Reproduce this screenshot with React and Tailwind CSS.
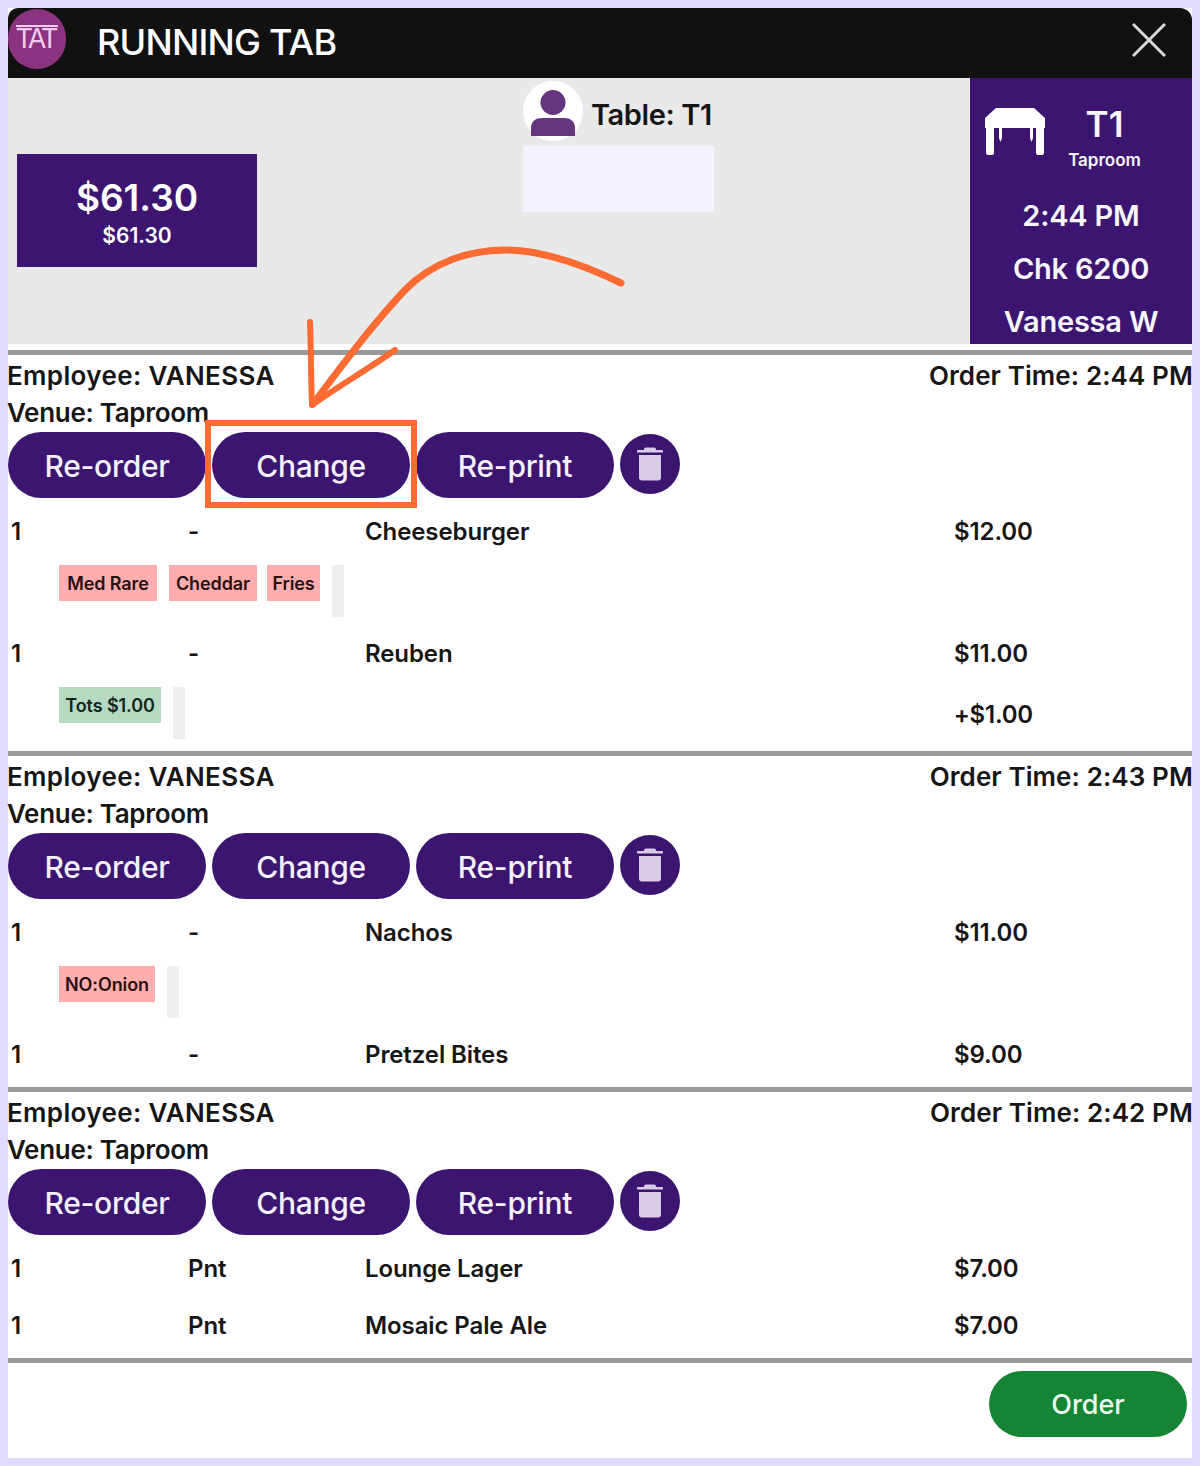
const font = { fontFamily: '"Inter", "Liberation Sans", sans-serif' };

function Trash() {
  return (
    <svg width="26" height="34" viewBox="0 0 26 34" fill="#d8cce6">
      <path d="M9 0.5h8a2 2 0 0 1 2 2v.5h6a1 1 0 0 1 1 1v1.5h-26v-1.5a1 1 0 0 1 1-1h6v-.5a2 2 0 0 1 2-2z" />
      <path d="M2 8h22v22.5a3 3 0 0 1-3 3h-16a3 3 0 0 1-3-3z" />
    </svg>
  );
}

function Pill({ children }) {
  return (
    <button className="w-[198px] h-[66px] pt-[3px] rounded-[33px] bg-[#3b1570] text-[#f5f0fa] text-[30px] font-medium tracking-[-0.3px] flex items-center justify-center">
      {children}
    </button>
  );
}

function Row({ size, name, price }) {
  return (
    <div className="grid grid-cols-[180px_177px_589px_1fr] h-[57px] items-center text-[24px] font-semibold tracking-[-0.1px] text-[#161616]">
      <div className="pl-[3px]">1</div>
      <div>{size}</div>
      <div>{name}</div>
      <div>{price}</div>
    </div>
  );
}

function Mods({ items, tone, extra }) {
  return (
    <div className="flex items-start mt-[5px] mb-[8px] pl-[51px] h-[52px] relative">
      <div className="flex">
        {items.map((m) => (
          <span
            key={m.text}
            className={`h-[36px] flex items-center justify-center whitespace-nowrap text-[18px] font-semibold tracking-[-0.1px] ${m.cls} ${tone === "green" ? "bg-[#b7d8c1] text-[#12261a]" : "bg-[#ffadad] text-[#2a1010]"}`}
          >
            {m.text}
          </span>
        ))}
        <span className="w-[12px] h-[52px] bg-[#efefef]" />
      </div>
      {extra && (
        <span className="ml-auto mr-[159px] mt-[10px] text-[24px] font-semibold tracking-[-0.2px] text-[#161616]">{extra}</span>
      )}
    </div>
  );
}

function Section({ time, children }) {
  return (
    <section className="border-t-[5px] border-[#999999]">
      <div className="flex justify-between text-[26px] font-semibold leading-[37px] pt-[2px] pb-[1px] text-[#161616] ml-[-1px] mr-[-1px]">
        <div>
          <div className="tracking-[0.35px]">Employee: VANESSA</div>
          <div className="tracking-[-0.3px]">Venue: Taproom</div>
        </div>
        <div className="tracking-[0.1px]">Order Time: {time}</div>
      </div>
      <div className="flex gap-[6px] items-start">
        <Pill>Re-order</Pill>
        <Pill>Change</Pill>
        <Pill>Re-print</Pill>
        <button className="w-[60px] h-[60px] mt-[2px] rounded-full bg-[#3b1570] flex items-center justify-center">
          <Trash />
        </button>
      </div>
      <div className="pt-[5px]">{children}</div>
    </section>
  );
}

export default function App() {
  return (
    <div style={font} className="relative w-[1200px] h-[1466px] bg-[#dfdcff] p-[8px] overflow-hidden">
      <div className="relative h-[1450px] bg-white flex flex-col">
        <header className="relative h-[70px] shrink-0 bg-[#111111] rounded-tl-[10px] rounded-tr-[12px] flex items-center pl-[89px] pr-[26px]">
          <div className="absolute left-0 top-[1px] w-[58px] h-[60px] rounded-full bg-[#8b3380] flex items-center justify-center text-[#f0cdee] text-[27px] font-normal tracking-[-3px]">
            <span className="border-t-[2px] border-[#f0cdee] leading-[24px] pr-[3px] -mt-[3px]">TAT</span>
          </div>
          <h1 className="text-[36px] font-medium text-white tracking-[-0.75px] -mt-[2px]">RUNNING TAB</h1>
          <svg className="ml-auto mb-[6px]" width="34" height="34" viewBox="0 0 34 34" stroke="#d8d8d8" strokeWidth="3" fill="none">
            <path d="M1 1L33 33M33 1L1 33" />
          </svg>
        </header>

        <div className="relative h-[266px] shrink-0 bg-[#e9e9e9] flex">
          <div className="w-[515px] pl-[9px] pt-[76px]">
            <div className="w-[240px] h-[113px] pt-[23px] bg-[#3b1570] text-white flex flex-col items-center">
              <div className="text-[37px] font-semibold leading-[42px]">$61.30</div>
              <div className="text-[21px] font-semibold leading-[26px] mt-[4px]">$61.30</div>
            </div>
          </div>
          <div className="w-[447px] pt-[3px]">
            <div className="flex items-center gap-[8px]">
              <div className="w-[60px] h-[60px] rounded-full bg-white flex items-center justify-center">
                <svg className="mt-[4px]" width="44" height="46" viewBox="0 0 44 46" fill="#65357e">
                  <ellipse cx="22" cy="12.5" rx="12.5" ry="12.5" />
                  <path d="M0 46v-8c0-7 5-10 11-10h22c6 0 11 3 11 10v8z" />
                </svg>
              </div>
              <span className="text-[29px] font-semibold text-[#161616] tracking-[-0.4px] pt-[8px]">Table: T1</span>
            </div>
            <div className="w-[191px] h-[66px] mt-[5px] bg-[#f5f3fe]" />
          </div>
          <aside className="w-[222px] bg-[#3b1570] text-[#f8f5fb] flex flex-col items-center overflow-hidden">
            <div className="flex w-full shrink-0 pt-[30px] pl-[15px] h-[111px]">
              <svg width="60" height="47" viewBox="0 0 60 47" fill="white">
                <path d="M11 0h38l11 10v10h-1v25a2 2 0 0 1-2 2h-4a2 2 0 0 1-2-2v-25h-42v25a2 2 0 0 1-2 2h-4a2 2 0 0 1-2-2v-25h-1v-10z" />
                <path d="M14 20h3v10l-1.500 4-1.500-4zM45 20h3v10l-1.500 4-1.500-4z" />
              </svg>
              <div className="flex-1 flex flex-col items-center pr-[28px] -mt-[5px]">
                <div className="text-[35px] font-semibold leading-[42px]">T1</div>
                <div className="text-[17px] font-semibold leading-[26px] mt-[2px]">Taproom</div>
              </div>
            </div>
            <div className="shrink-0 text-[29px] font-semibold leading-[53px] tracking-[-0.2px]">2:44 PM</div>
            <div className="shrink-0 text-[29px] font-semibold leading-[53px] tracking-[-0.2px]">Chk 6200</div>
            <div className="shrink-0 text-[29px] font-semibold leading-[53px] tracking-[-0.2px]">Vanessa W</div>
          </aside>
        </div>

        <div className="h-[6px] shrink-0 bg-white" />

        <Section time="2:44 PM">
          <Row size="-" name="Cheeseburger" price="$12.00" />
          <Mods
            items={[
              { text: "Med Rare", cls: "w-[98px] mr-[12px]" },
              { text: "Cheddar", cls: "w-[88px] mr-[10px]" },
              { text: "Fries", cls: "w-[53px] mr-[12px]" },
            ]}
          />
          <Row size="-" name="Reuben" price="$11.00" />
          <Mods items={[{ text: "Tots $1.00", cls: "w-[102px] mr-[12px]" }]} tone="green" extra="+$1.00" />
          <div className="h-[4px]" />
        </Section>

        <Section time="2:43 PM">
          <Row size="-" name="Nachos" price="$11.00" />
          <Mods items={[{ text: "NO:Onion", cls: "w-[96px] mr-[12px]" }]} />
          <Row size="-" name="Pretzel Bites" price="$9.00" />
          <div className="h-[4px]" />
        </Section>

        <Section time="2:42 PM">
          <Row size="Pnt" name="Lounge Lager" price="$7.00" />
          <Row size="Pnt" name="Mosaic Pale Ale" price="$7.00" />
          <div className="h-[4px]" />
        </Section>

        <footer className="border-t-[5px] border-[#999999] flex justify-end pt-[8px] pr-[5px]">
          <button className="w-[198px] h-[66px] pt-[3px] rounded-[33px] bg-[#138535] text-[#eefaf0] text-[27px] font-medium">Order</button>
        </footer>
      </div>

      <div className="absolute left-[205px] top-[420px] w-[212px] h-[88px] border-[6px] border-[#fb6b32]" />
      <svg className="absolute left-0 top-0 pointer-events-none" width="1200" height="1466" fill="none" stroke="#fb6b32" strokeLinecap="round" strokeLinejoin="round">
        <path strokeWidth="7" d="M621 283C590 268 545 250 505 250C470 250 432 262 405 290C372 325 340 368 313 404" />
        <path strokeWidth="6" d="M310 322C311 350 311 380 312 405C340 385 370 368 395 350" />
      </svg>
    </div>
  );
}
